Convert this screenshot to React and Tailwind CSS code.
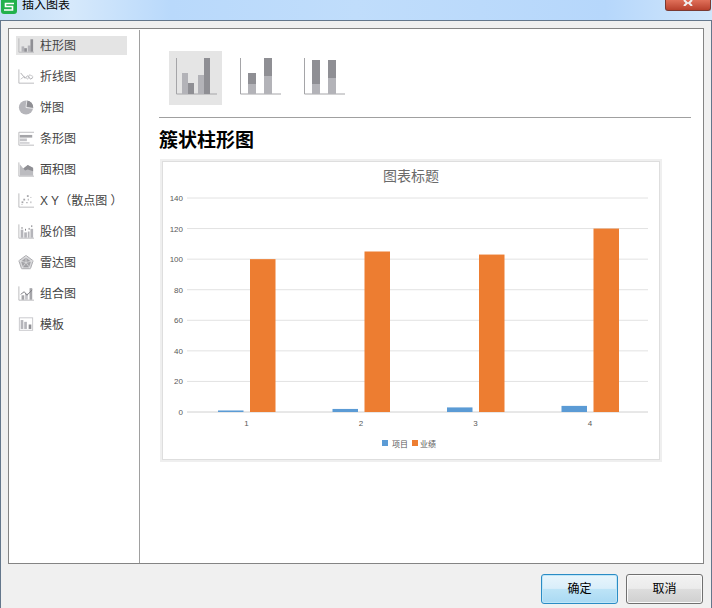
import React from 'react';

const cjk = { fontFamily: '"Liberation Sans", "Noto Sans CJK SC", sans-serif' };

const IconFrame = ({ children }) => (
  <svg width="16" height="15" viewBox="0 0 18 16" className="shrink-0">
    {children}
  </svg>
);

const axis = <path d="M1 0v15.5H18" fill="none" stroke="#b5b5b8" strokeWidth="1" />;

const sideItems = [
  {
    label: '柱形图',
    icon: (
      <IconFrame>
        {axis}
        <rect x="4" y="9" width="3" height="6" fill="#b3b3b8" />
        <rect x="7" y="11" width="3" height="4" fill="#8f8f94" />
        <rect x="11" y="8" width="3" height="7" fill="#b3b3b8" />
        <rect x="14" y="1" width="3" height="14" fill="#8f8f94" />
      </IconFrame>
    ),
  },
  {
    label: '折线图',
    icon: (
      <IconFrame>
        {axis}
        <path d="M3 4l5 6 3-3 3 4 3-2" fill="none" stroke="#a5a5a9" strokeWidth="1" />
        <path d="M3 11l4-3 4 3 2-5 4 2" fill="none" stroke="#c4c4c8" strokeWidth="1" />
      </IconFrame>
    ),
  },
  {
    label: '饼图',
    icon: (
      <IconFrame>
        <circle cx="9" cy="8" r="8" fill="#b5b5ba" />
        <path d="M10 0a8 8 0 0 1 7 9L9 7z" fill="#8f8f94" />
        <path d="M9 8l8 1M9 8l1-8" stroke="#fff" strokeWidth="0.8" />
      </IconFrame>
    ),
  },
  {
    label: '条形图',
    icon: (
      <IconFrame>
        <path d="M1 1v14.5M1 1H18M1 15.5H18" fill="none" stroke="#b5b5b8" strokeWidth="1" />
        <rect x="2" y="4" width="14" height="3" fill="#a5a5a9" />
        <rect x="2" y="8" width="8" height="3" fill="#c4c4c8" />
        <rect x="2" y="12" width="11" height="2" fill="#d2d2d5" />
      </IconFrame>
    ),
  },
  {
    label: '面积图',
    icon: (
      <IconFrame>
        {axis}
        <path d="M2 2l4 5 5-4 6 4v8H2z" fill="#bcbcc0" />
        <path d="M6 7l5-4 6 3v4l-6-2-3 1z" fill="#8f8f94" />
      </IconFrame>
    ),
  },
  {
    label: 'X Y（散点图 ）',
    icon: (
      <IconFrame>
        {axis}
        <g fill="#a5a5a9">
          <rect x="4" y="9" width="2" height="2" />
          <rect x="6" y="6" width="2" height="2" />
          <rect x="10" y="2" width="2" height="2" />
          <rect x="14" y="4" width="1" height="1" />
          <rect x="4" y="12" width="1" height="1" />
          <rect x="9" y="10" width="2" height="1" />
          <rect x="14" y="9" width="1" height="2" />
          <rect x="11" y="6" width="1" height="2" />
        </g>
      </IconFrame>
    ),
  },
  {
    label: '股价图',
    icon: (
      <IconFrame>
        {axis}
        <g fill="#b5b5ba">
          <rect x="3" y="6" width="3" height="9" />
          <rect x="7" y="9" width="3" height="6" />
          <rect x="11" y="8" width="2" height="7" />
          <rect x="14" y="5" width="3" height="10" />
        </g>
        <g fill="#77777c">
          <rect x="4" y="3" width="1" height="2" />
          <rect x="8" y="5" width="1" height="2" />
          <rect x="12" y="4" width="1" height="2" />
          <rect x="15" y="1" width="1" height="2" />
        </g>
      </IconFrame>
    ),
  },
  {
    label: '雷达图',
    icon: (
      <IconFrame>
        <path d="M9 0l8 6-3 9H4L1 6z" fill="#d8d8da" stroke="#a5a5a9" strokeWidth="1" />
        <path d="M9 3l5 4-2 6H6L4 7z" fill="#a5a5a9" stroke="#8f8f94" strokeWidth="0.6" />
        <path d="M9 0v8M1 6l8 2 8-2M4 15l5-7 5 7" fill="none" stroke="#e8e8ea" strokeWidth="0.7" />
      </IconFrame>
    ),
  },
  {
    label: '组合图',
    icon: (
      <IconFrame>
        {axis}
        <rect x="4" y="10" width="3" height="5" fill="#a5a5a9" />
        <rect x="8" y="8" width="3" height="7" fill="#c4c4c8" />
        <rect x="13" y="2" width="3" height="13" fill="#a5a5a9" />
        <path d="M3 9l4-3 3 4 6-6" fill="none" stroke="#77777c" strokeWidth="1" />
      </IconFrame>
    ),
  },
  {
    label: '模板',
    icon: (
      <IconFrame>
        <rect x="1.5" y="0.5" width="15" height="14" fill="#fff" stroke="#c4c4c8" />
        <rect x="3" y="3" width="3" height="10" fill="#b5b5ba" />
        <rect x="7" y="5" width="3" height="8" fill="#b5b5ba" />
        <rect x="12" y="8" width="3" height="5" fill="#8f8f94" />
      </IconFrame>
    ),
  },
];

const ChartTypeIcon = ({ bars }) => (
  <svg width="42" height="38" viewBox="0 0 42 38" className="shrink-0">
    <path d="M0.5 0v36H41" fill="none" stroke="#a5a5a8" strokeWidth="1" />
    {bars.map((b, i) => (
      <rect key={i} x={b[0]} y={b[1]} width={b[2]} height={b[3]} fill={b[4]} />
    ))}
  </svg>
);

const light = '#b3b3b8';
const dark = '#8f8f94';

const ClusteredChart = () => {
  const ticks = [0, 20, 40, 60, 80, 100, 120, 140];
  const data = [
    { name: '1', a: 1, b: 100 },
    { name: '2', a: 2, b: 105 },
    { name: '3', a: 3, b: 103 },
    { name: '4', a: 4, b: 120 },
  ];
  const zeroY = 250;
  const scale = 214 / 140;

  return (
    <svg width="496" height="297" viewBox="0 0 496 297" style={cjk}>
      <text x="248" y="19" textAnchor="middle" fontSize="14" fill="#6a6a6a">图表标题</text>
      {ticks.map((t) => (
        <g key={t}>
          <line
            x1="24"
            x2="485"
            y1={zeroY - t * scale}
            y2={zeroY - t * scale}
            stroke={t === 0 ? '#d0d0d0' : '#e2e2e2'}
            strokeWidth="1"
          />
          <text x="20" y={zeroY - t * scale + 3} textAnchor="end" fontSize="8" fill="#595959">{t}</text>
        </g>
      ))}
      {data.map((d, i) => {
        const x = 55 + i * 114.5;
        return (
          <g key={d.name}>
            <rect x={x} y={zeroY - d.a * scale} width="25.5" height={d.a * scale} fill="#5b9bd5" />
            <rect x={x + 32} y={zeroY - d.b * scale} width="25.5" height={d.b * scale} fill="#ed7d31" />
            <text x={x + 28.5} y={zeroY + 14} textAnchor="middle" fontSize="8" fill="#595959">{d.name}</text>
          </g>
        );
      })}
      <rect x="219" y="278" width="6" height="6" fill="#5b9bd5" />
      <text x="229" y="285" fontSize="8" fill="#595959">项目</text>
      <rect x="249" y="278" width="6" height="6" fill="#ed7d31" />
      <text x="257" y="285" fontSize="8" fill="#595959">业绩</text>
    </svg>
  );
};

const App = () => {
  return (
    <div className="w-[712px] h-[608px] flex flex-col bg-[#f0f0f0] overflow-hidden text-black" style={cjk}>
      {/* title bar, cut off at the top of the shot */}
      <div className="h-5 shrink-0 flex items-start justify-between bg-[linear-gradient(to_right,#c4dff8_0%,#d6e9fb_10%,#b9d9fb_24%,#c0ddfb_50%,#b6d7fb_85%,#d0e6fb_100%)]">
        <div className="flex items-start">
          <div className="w-4 h-[14px] ml-[1px] rounded-b-[3px] bg-[#22b14c] flex items-center justify-center">
            <svg width="12" height="10" viewBox="0 0 12 10">
              <path d="M11 1.5H2.5v3h7v3.5H1" fill="none" stroke="#fff" strokeWidth="1.6" />
            </svg>
          </div>
          <span className="ml-[5px] text-xs leading-[11px]">插入图表</span>
        </div>
        <div className="w-[46px] h-[11px] mr-[1px] rounded-b-[3px] border border-t-0 border-[#7a3a32] bg-gradient-to-b from-[#e0705a] to-[#b8402c] flex items-start justify-center overflow-hidden">
          <svg width="12" height="6" viewBox="0 0 12 6" className="shrink-0">
            <path d="M2 0l3 3-3 3M10 0L7 3l3 3" fill="none" stroke="#f2f2f2" strokeWidth="2" />
          </svg>
        </div>
      </div>

      {/* window body */}
      <div className="flex-1 flex flex-col border-t border-x border-[#64778c] px-[7px] pt-[7px]">
        <div className="h-[536px] flex bg-white border border-[#848484]">
          {/* left list */}
          <div className="w-[131px] shrink-0 border-r border-[#a0a0a0] mt-[1px] pl-[7px] pt-[6px]">
            <ul className="flex flex-col gap-3">
              {sideItems.map((item, i) => (
                <li
                  key={item.label}
                  className={
                    'h-[19px] w-[111px] flex items-center pl-[2px] gap-[6px] text-xs text-[#444] ' +
                    (i === 0 ? 'bg-[#e4e4e4] text-[#222]' : '')
                  }
                >
                  {item.icon}
                  <span className="whitespace-nowrap">{item.label}</span>
                </li>
              ))}
            </ul>
          </div>

          {/* right side */}
          <div className="flex-1 pl-[19px] pt-[22px]">
            <div className="w-[532px] h-[67px] flex items-start pl-[10px] border-b border-[#a0a0a0]">
              <div className="w-[53px] h-[54px] bg-[#e5e5e5] pl-[7px] pt-[7px]">
                <ChartTypeIcon
                  bars={[
                    [6, 15, 6, 21, light],
                    [12, 25, 6, 11, dark],
                    [22, 17, 6, 19, light],
                    [28, 0, 6, 36, dark],
                  ]}
                />
              </div>
              <div className="ml-[18px] pt-[7px]">
                <ChartTypeIcon
                  bars={[
                    [8, 26, 8, 10, light],
                    [8, 15, 8, 11, dark],
                    [24, 18, 8, 18, light],
                    [24, 0, 8, 18, dark],
                  ]}
                />
              </div>
              <div className="ml-[22px] pt-[7px]">
                <ChartTypeIcon
                  bars={[
                    [8, 26, 8, 10, light],
                    [8, 2, 8, 24, dark],
                    [24, 20, 8, 16, light],
                    [24, 2, 8, 18, dark],
                  ]}
                />
              </div>
            </div>
            <h2 className="mt-[9px] text-[19px] leading-[28px] font-bold">簇状柱形图</h2>
            <div className="mt-1 ml-[1px] w-[502px] h-[303px] border-2 border-[#efefef] bg-white">
              <div className="border border-[#dedede] w-full h-full">
                <ClusteredChart />
              </div>
            </div>
          </div>
        </div>

        {/* footer buttons */}
        <div className="flex justify-end gap-2 pt-[10px] pr-[1px]">
          <button className="w-[77px] h-[30px] rounded-[3px] border border-[#2a8cc5] text-xs text-black bg-[linear-gradient(to_bottom,#e8f5fc_0%,#d9eefa_48%,#bde4f7_50%,#a9d9f3_100%)] shadow-[inset_0_0_0_1px_#bfe6f8]">
            确定
          </button>
          <button className="w-[77px] h-[30px] rounded-[3px] border border-[#707070] text-xs text-black bg-[linear-gradient(to_bottom,#f2f2f2_0%,#ebebeb_48%,#dddddd_50%,#cfcfcf_100%)] shadow-[inset_0_0_0_1px_#fafafa]">
            取消
          </button>
        </div>
      </div>
    </div>
  );
};

export default App;
